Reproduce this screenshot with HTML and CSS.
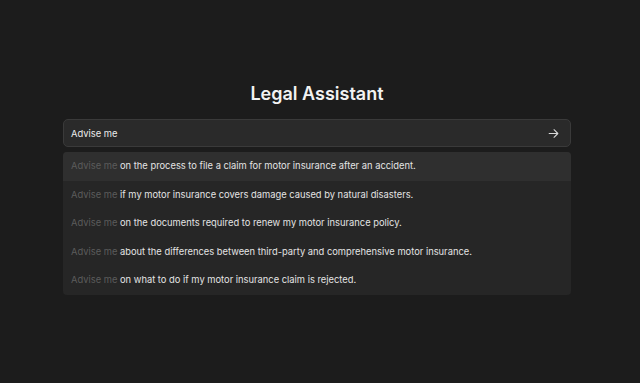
FILE: index.html
```html
<!DOCTYPE html>
<html lang="en">
<head>
  <meta charset="UTF-8">
  <meta name="viewport" content="width=device-width, initial-scale=1.0">
  <title>Legal Assistant</title>
  <link rel="stylesheet" href="styles.css">
</head>
<body>
  <div class="assistant">
    <h1>Legal Assistant</h1>

    <div class="search-box">
      <span class="search-text">Advise me</span>
      <svg class="send-icon" viewBox="0 0 24 24" fill="none" xmlns="http://www.w3.org/2000/svg">
        <path d="M4 12H20M13 5L20 12L13 19" stroke="currentColor" stroke-width="2" stroke-linecap="round" stroke-linejoin="round"/>
      </svg>
    </div>

    <ul class="suggestions">
      <li class="active"><span class="prefix">Advise me</span> on the process to file a claim for motor insurance after an accident.</li>
      <li><span class="prefix">Advise me</span> if my motor insurance covers damage caused by natural disasters.</li>
      <li><span class="prefix">Advise me</span> on the documents required to renew my motor insurance policy.</li>
      <li><span class="prefix">Advise me</span> about the differences between third-party and comprehensive motor insurance.</li>
      <li><span class="prefix">Advise me</span> on what to do if my motor insurance claim is rejected.</li>
    </ul>
  </div>
</body>
</html>
```

FILE: styles.css
```css
body {
  font-family: Inter, 'Noto Sans', sans-serif;
  background-color: #1c1c1c;
  color: #e8e8e8;
  margin: 0;
  padding-right: 6px;
  height: 100vh;
}

.assistant {
  width: 508px;
  margin: 0 auto;
  padding-top: 82px;
}

h1 {
  font-size: 18px;
  font-weight: 600;
  text-align: center;
  color: #f2f2f2;
  margin: 0 0 13px;
  line-height: 24px;
}

.search-box {
  display: flex;
  align-items: center;
  justify-content: space-between;
  height: 26px;
  padding: 0 10px 0 7px;
  background-color: #2a2a2a;
  border: 1px solid #3a3a3a;
  border-radius: 5px;
}

.search-text {
  font-size: 9.4px;
  color: #ececec;
}

.send-icon {
  width: 13px;
  height: 13px;
  color: #d8d8d8;
}

.suggestions {
  list-style: none;
  margin: 5px 0 0;
  padding: 0;
  background-color: #262626;
  border-radius: 4px;
  overflow: hidden;
}

.suggestions li {
  height: 28.5px;
  line-height: 28.5px;
  padding-left: 8px;
  font-size: 9.35px;
  color: #e4e4e4;
  white-space: nowrap;
}

.suggestions li.active {
  background-color: #2f2f2f;
}

.prefix {
  color: #5c5c5c;
}
```
